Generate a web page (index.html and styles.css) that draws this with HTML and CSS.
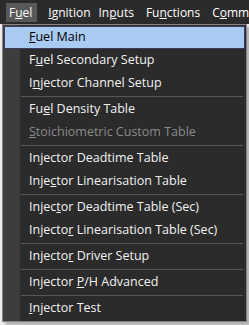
FILE: index.html
```html
<!DOCTYPE html>
<html lang="en">
<head>
  <meta charset="UTF-8" />
  <title>Fuel menu</title>
  <link rel="stylesheet" href="styles.css">
</head>
<body>
  <!-- menu bar -->
  <div class="menubar">
    <span class="top-item top-open">F<u>u</u>el</span>
    <span class="top-item top-tight"><u>I</u>gnition</span>
    <span class="top-item">In<u>p</u>uts</span>
    <span class="top-item">Fu<u>n</u>ctions</span>
    <span class="top-item">C<u>o</u>mm</span>
  </div>

  <!-- dropdown -->
  <div class="dropdown">
    <div class="item active"><u>F</u>uel Main</div>
    <div class="item">F<u>u</u>el Secondary Setup</div>
    <div class="item">I<u>n</u>jector Channel Setup</div>
    <div class="sep"></div>
    <div class="item">Fu<u>e</u>l Density Table</div>
    <div class="item disabled"><u>S</u>toichiometric Custom Table</div>
    <div class="sep"></div>
    <div class="item">In<u>j</u>ector Deadtime Table</div>
    <div class="item">Inje<u>c</u>tor Linearisation Table</div>
    <div class="sep"></div>
    <div class="item">Injec<u>t</u>or Deadtime Table (Sec)</div>
    <div class="item">Injecto<u>r</u> Linearisation Table (Sec)</div>
    <div class="sep"></div>
    <div class="item">Injecto<u>r</u> Driver Setup</div>
    <div class="sep"></div>
    <div class="item">Injector <u>P</u>/H Advanced</div>
    <div class="sep"></div>
    <div class="item"><u>I</u>njector Test</div>
  </div>
</body>
</html>
```

FILE: styles.css
```css
body {
  margin: 0;
  width: 249px;
  height: 325px;
  overflow: hidden;
  position: relative;
  background: #ececec;
  font-family: 'Open Sans', 'Noto Sans', sans-serif;
  font-size: 12.5px;
}

/* menu bar */
.menubar {
  display: flex;
  height: 24px;
  padding-left: 6px;
  background-color: #2b2b2b;
  color: #fff;
  overflow: hidden;
}

.top-item {
  padding: 1px 3px 0;
  margin-right: 6px;
  line-height: 18px;
  height: 18px;
  margin-top: 3px;
  white-space: nowrap;
  font-size: 12px;
}

.top-open {
  padding-right: 5px;
  margin-right: 8px;
  background-color: #585858;
}

.top-tight {
  margin-right: 2px;
}

/* dropdown */
.dropdown {
  position: absolute;
  top: 24px;
  left: 2px;
  width: 241px;
  padding: 1px;
  border: 1px solid #8c8284;
  background: linear-gradient(to right, #3d3d3d 17px, #2b2b2b 17px);
  box-shadow: 3px 3px 2px rgba(0, 0, 0, 0.25);
  color: #f2f2f2;
}

.item {
  height: 23px;
  line-height: 22px;
  padding-left: 25px;
  white-space: nowrap;
  box-sizing: border-box;
}

.item.active {
  background-color: #a9cbf1;
  border: 1px solid #3b3b5c;
  padding-left: 24px;
  line-height: 20px;
  color: #000;
}

.item.disabled {
  color: #8a8a8a;
}

.sep {
  height: 1px;
  margin: 1px 2px 1px 17px;
  background-color: #575757;
}
```
